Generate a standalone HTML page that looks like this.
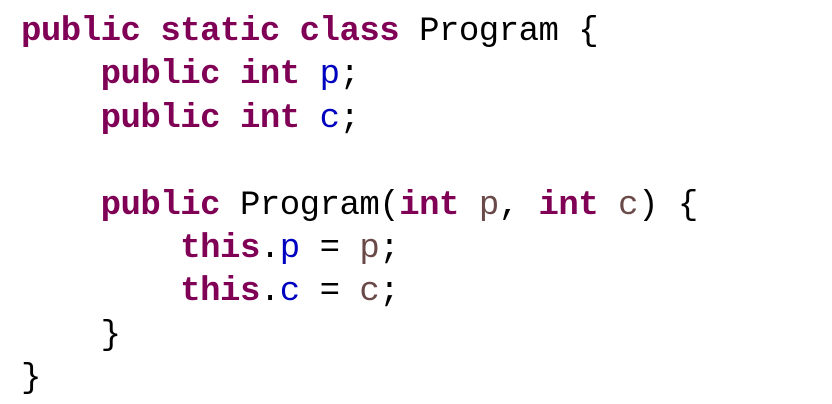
<!DOCTYPE html>
<html><head><style>
html,body{margin:0;padding:0;background:#fff;width:832px;height:404px;overflow:hidden}
pre{margin:0;position:absolute;left:21px;top:11px;font-family:"Liberation Mono",monospace;font-size:34px;line-height:43.4px;color:#000;letter-spacing:-0.5px}
.k{color:#7f0055;font-weight:bold}
.f{color:#0000c0}
.v{color:#6a4a48}
</style></head><body>
<pre><span class="k">public static class</span> Program {
    <span class="k">public int</span> <span class="f">p</span>;
    <span class="k">public int</span> <span class="f">c</span>;

    <span class="k">public</span> Program(<span class="k">int</span> <span class="v">p</span>, <span class="k">int</span> <span class="v">c</span>) {
        <span class="k">this</span>.<span class="f">p</span> = <span class="v">p</span>;
        <span class="k">this</span>.<span class="f">c</span> = <span class="v">c</span>;
    }
}</pre>
</body></html>
